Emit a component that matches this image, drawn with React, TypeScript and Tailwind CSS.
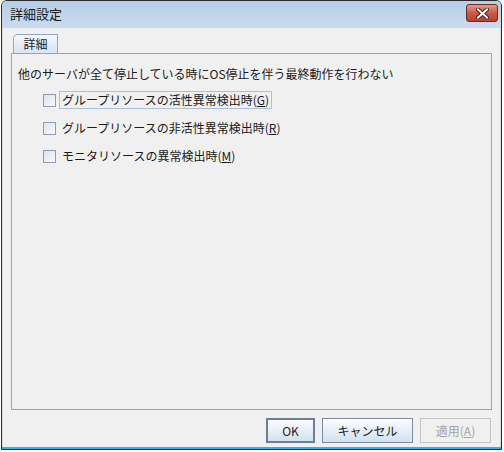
import React from 'react';

const font = { fontFamily: '"Noto Sans CJK JP", "Noto Sans", sans-serif' };

type Item = { label: string; key: string; focused?: boolean };

const items: Item[] = [
  { label: 'グループリソースの活性異常検出時', key: 'G', focused: true },
  { label: 'グループリソースの非活性異常検出時', key: 'R' },
  { label: 'モニタリソースの異常検出時', key: 'M' },
];

function CheckRow({ item }: { item: Item }) {
  return (
    <div className="flex items-center h-[28px] pl-[25px]">
      <span className="w-[13px] h-[13px] border border-[#8e9bb0] bg-gradient-to-br from-[#dce3ec] to-[#f8fafc] shrink-0" />
      <span
        className={
          'ml-[3px] px-[2px] h-[18px] flex items-center border ' +
          (item.focused ? 'border-[#a9c1dd]' : 'border-transparent')
        }
      >
        {item.label}(<span className="underline">{item.key}</span>)
      </span>
    </div>
  );
}

function Button({
  children,
  width,
  disabled,
  primary,
}: {
  children: React.ReactNode;
  width: string;
  disabled?: boolean;
  primary?: boolean;
}) {
  if (disabled) {
    return (
      <div
        className={
          width +
          ' h-[25px] flex items-center justify-center border border-[#c3c3c3] bg-[#f0f0f0] text-[#a3a3a3]'
        }
      >
        {children}
      </div>
    );
  }
  return (
    <div
      className={
        width +
        ' h-[25px] flex items-center justify-center bg-gradient-to-b from-[#fbfcfe] to-[#d4e1f0] text-[#222] ' +
        (primary ? 'border-2 border-[#6f7f93]' : 'border border-[#7b8ba0]')
      }
    >
      {children}
    </div>
  );
}

export default function App() {
  return (
    <div className="w-[504px] h-[452px] bg-white text-[12px] text-[#1a1a1a]" style={font}>
      <div className="w-[501px] h-[450px] ml-[1px] flex flex-col border border-[#2b2b2b] rounded-t-[6px] overflow-hidden bg-[#f0f0f0]">
        {/* タイトルバー */}
        <div className="h-[27px] shrink-0 flex items-center justify-between pl-[8px] pr-[3px] bg-gradient-to-b from-[#b6cee8] to-[#c9dbef]">
          <span className="text-[13px] mt-[-2px]">詳細設定</span>
          <div className="w-[32px] h-[18px] mt-[-3px] rounded-[3px] border border-[#6b2a22] bg-gradient-to-b from-[#e39a8c] via-[#cc5a45] to-[#b8402c] flex items-center justify-center">
            <svg width="13" height="11" viewBox="0 0 13 11">
              <path d="M2 1.5 L11 9.5 M11 1.5 L2 9.5" stroke="#4a1c16" strokeWidth="4" strokeLinecap="square" />
              <path d="M2 1.5 L11 9.5 M11 1.5 L2 9.5" stroke="#ffffff" strokeWidth="2" strokeLinecap="square" />
            </svg>
          </div>
        </div>

        {/* 本体 */}
        <div className="flex-1 flex flex-col px-[8px] pt-[6px] border-l border-r border-[#dcdcdc]">
          <div className="flex">
            <div className="ml-[2px] w-[45px] h-[19px] border border-b-0 border-[#8fa6c6] rounded-tl-[5px] bg-gradient-to-b from-[#f4f8fc] to-[#d6e4f3] flex items-center justify-center">
              詳細
            </div>
          </div>
          <div className="h-[357px] border border-[#8fa6c6] pt-[12px] pl-[6px] flex flex-col">
            <div className="h-[16px] flex items-center">
              他のサーバが全て停止している時にOS停止を伴う最終動作を行わない
            </div>
            <div className="mt-[4px] flex flex-col">
              {items.map(it => (
                <CheckRow key={it.key} item={it} />
              ))}
            </div>
          </div>
          <div className="flex justify-end gap-[7px] pt-[8px] pr-[1px]">
            <Button width="w-[49px]" primary>
              OK
            </Button>
            <Button width="w-[91px]">キャンセル</Button>
            <Button width="w-[71px]" disabled>
              適用(<span className="underline">A</span>)
            </Button>
          </div>
        </div>
        <div className="h-[2px] bg-[#2fb3e4] shrink-0" />
      </div>
    </div>
  );
}
